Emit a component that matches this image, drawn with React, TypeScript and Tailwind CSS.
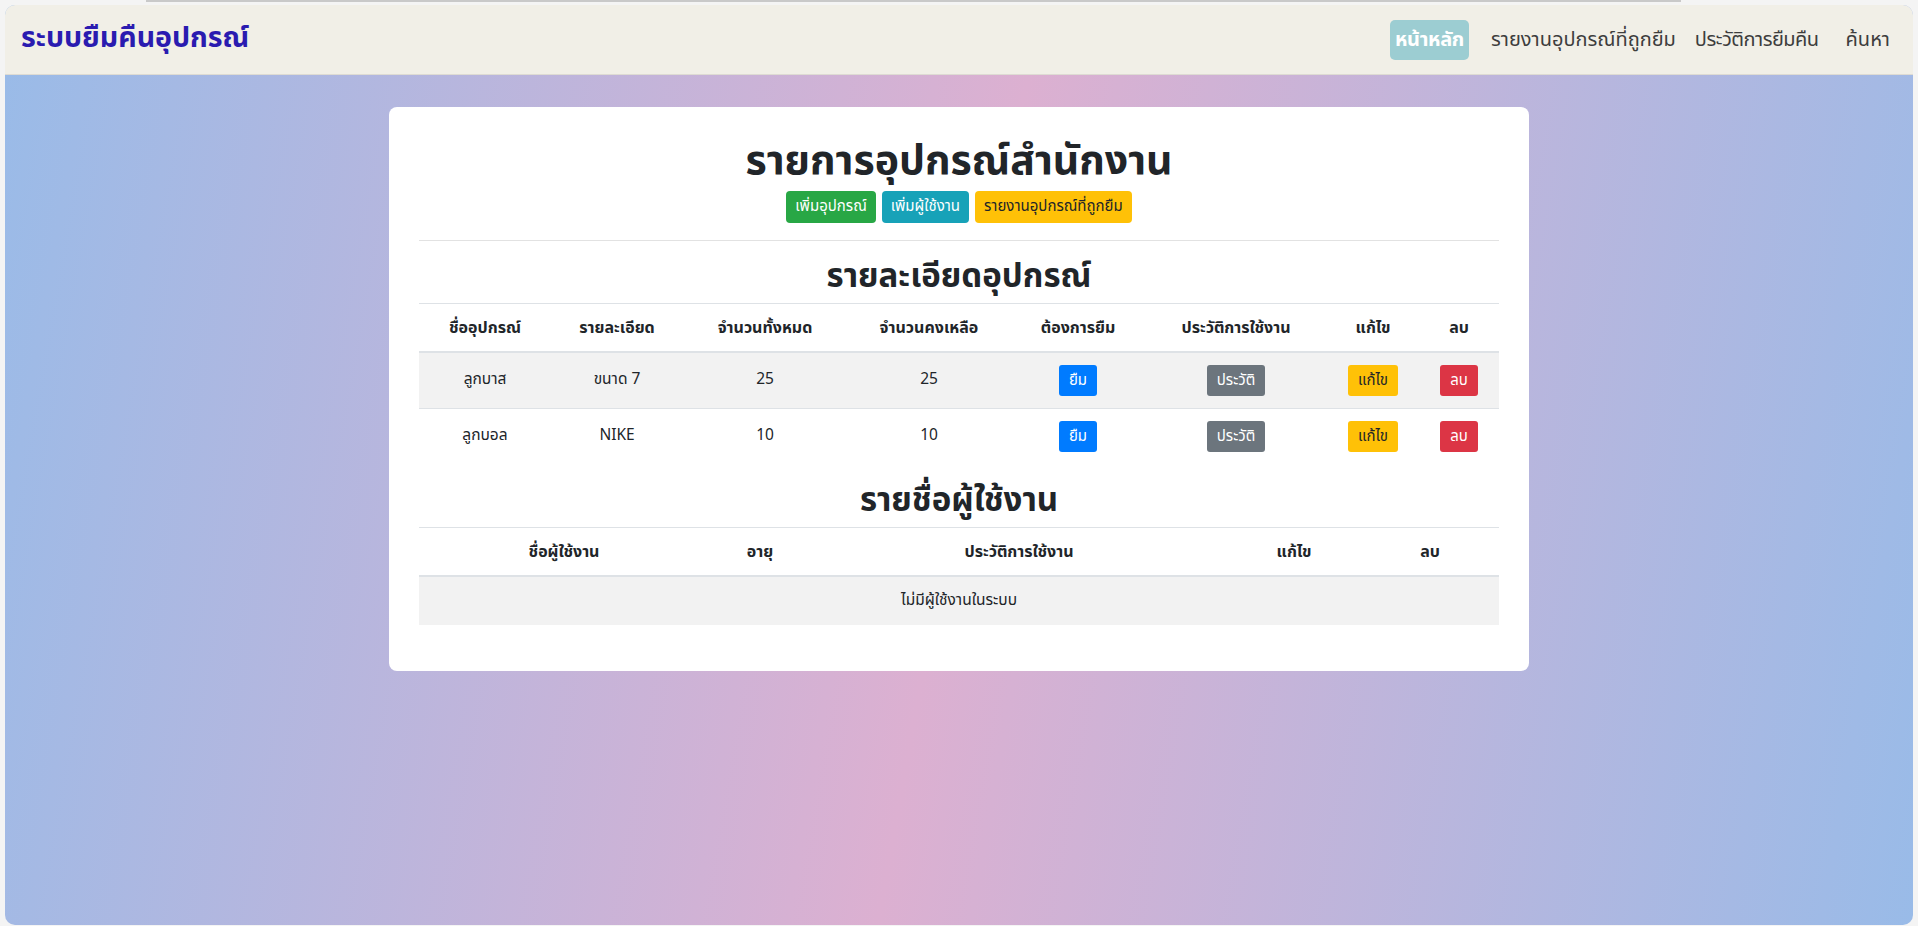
const equipment = [
  { name: "ลูกบาส", detail: "ขนาด 7", total: 25, left: 25 },
  { name: "ลูกบอล", detail: "NIKE", total: 10, left: 10 },
];

const th = "px-3 pt-[12px] pb-[11px] text-center font-bold text-[16px] leading-6 border-b-2 border-[#dee2e6]";
const td = "px-3 py-0 h-[56px] text-center text-[15.5px] leading-6 border-t border-[#dee2e6] align-middle";
const btn = "text-[15px] leading-none px-[10px] h-[31px] rounded-[3px] align-middle";

const App = () => {
  return (
    <div
      className="w-full h-[926px] bg-[#f4f4f4] px-[5px] overflow-hidden text-[#212529]"
      style={{ fontFamily: '"Noto Sans Thai", "Noto Sans", "Liberation Sans", sans-serif' }}
    >
      <div className="h-[5px]">
        <div className="ml-[141px] w-[1535px] h-[2px] bg-[#c9c9c9]" />
      </div>
      <div className="h-[920px] rounded-[10px] overflow-hidden flex flex-col bg-[linear-gradient(100deg,#99bbe8_0%,#dcb0d1_50%,#99bbe8_100%)]">
        <nav className="h-[70px] shrink-0 bg-[#f1efe7] border-b border-[#dedbd3] flex items-center justify-between pl-4 pr-[23px]">
          <a className="text-[28.5px] font-bold text-[#2a1bb0] leading-none">ระบบยืมคืนอุปกรณ์</a>
          <div className="flex items-center text-[20px] text-[#3d3d3d]">
            <a className="bg-[#9ccdd2] text-white font-bold tracking-[-0.3px] rounded-[5px] px-[5px] h-[40px] flex items-center">หน้าหลัก</a>
            <a className="ml-[22px]">รายงานอุปกรณ์ที่ถูกยืม</a>
            <a className="ml-[19px] tracking-[-0.5px]">ประวัติการยืมคืน</a>
            <a className="ml-[27px]">ค้นหา</a>
          </div>
        </nav>
        <div className="flex justify-center pt-[32px]">
          <div className="w-[1140px] bg-white rounded-[8px] px-[30px] pt-[30px] pb-[30px]">
            <h1 className="text-center text-[41px] font-bold leading-[48px]">รายการอุปกรณ์สำนักงาน</h1>
            <div className="flex justify-center gap-[6px] mt-[6px]">
              <button className="bg-[#28a745] text-white text-[15px] px-[9px] h-[32px] rounded-[4px]">เพิ่มอุปกรณ์</button>
              <button className="bg-[#17a2b8] text-white text-[15px] px-[9px] h-[32px] rounded-[4px]">เพิ่มผู้ใช้งาน</button>
              <button className="bg-[#ffc107] text-[#212529] text-[15px] px-[9px] h-[32px] rounded-[4px]">รายงานอุปกรณ์ที่ถูกยืม</button>
            </div>
            <hr className="mt-[17px] border-[#e2e2e2]" />
            <h2 className="text-center text-[33px] font-bold leading-[40px] mt-[16px] mb-[6px]">รายละเอียดอุปกรณ์</h2>
            <table className="w-full table-fixed border-collapse">
              <colgroup>
                <col className="w-[132px]" />
                <col className="w-[132px]" />
                <col className="w-[164px]" />
                <col className="w-[164px]" />
                <col className="w-[134px]" />
                <col className="w-[182px]" />
                <col className="w-[92px]" />
                <col className="w-[80px]" />
              </colgroup>
              <thead>
                <tr className="border-t border-[#dee2e6]">
                  <th className={th}>ชื่ออุปกรณ์</th>
                  <th className={th}>รายละเอียด</th>
                  <th className={th}>จำนวนทั้งหมด</th>
                  <th className={th}>จำนวนคงเหลือ</th>
                  <th className={th}>ต้องการยืม</th>
                  <th className={th}>ประวัติการใช้งาน</th>
                  <th className={th}>แก้ไข</th>
                  <th className={th}>ลบ</th>
                </tr>
              </thead>
              <tbody>
                {equipment.map((e, i) => (
                  <tr key={e.name} className={i % 2 === 0 ? "bg-[#f2f2f2]" : ""}>
                    <td className={td}>{e.name}</td>
                    <td className={td}>{e.detail}</td>
                    <td className={td}>{e.total}</td>
                    <td className={td}>{e.left}</td>
                    <td className={td}>
                      <button className={`bg-[#007bff] text-white ${btn}`}>ยืม</button>
                    </td>
                    <td className={td}>
                      <button className={`bg-[#6c757d] text-white ${btn}`}>ประวัติ</button>
                    </td>
                    <td className={td}>
                      <button className={`bg-[#ffc107] text-[#212529] ${btn}`}>แก้ไข</button>
                    </td>
                    <td className={td}>
                      <button className={`bg-[#dc3545] text-white ${btn}`}>ลบ</button>
                    </td>
                  </tr>
                ))}
              </tbody>
            </table>
            <h2 className="text-center text-[33px] font-bold leading-[40px] mt-[17px] mb-[6px]">รายชื่อผู้ใช้งาน</h2>
            <table className="w-full table-fixed border-collapse mb-[16px]">
              <colgroup>
                <col className="w-[290px]" />
                <col className="w-[102px]" />
                <col className="w-[416px]" />
                <col className="w-[134px]" />
                <col className="w-[138px]" />
              </colgroup>
              <thead>
                <tr className="border-t border-[#dee2e6]">
                  <th className={th}>ชื่อผู้ใช้งาน</th>
                  <th className={th}>อายุ</th>
                  <th className={th}>ประวัติการใช้งาน</th>
                  <th className={th}>แก้ไข</th>
                  <th className={th}>ลบ</th>
                </tr>
              </thead>
              <tbody>
                <tr className="bg-[#f2f2f2]">
                  <td colSpan={5} className="px-3 h-[49px] text-center text-[15.5px] leading-6 align-middle">
                    ไม่มีผู้ใช้งานในระบบ
                  </td>
                </tr>
              </tbody>
            </table>
          </div>
        </div>
      </div>
    </div>
  );
};

export default App;
